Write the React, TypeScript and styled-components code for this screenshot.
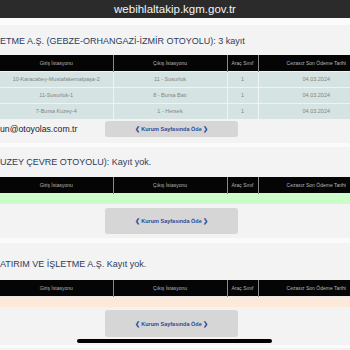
import React from "react";
import styled, { createGlobalStyle } from "styled-components";

const GlobalStyle = createGlobalStyle`
  html, body {
    margin: 0;
    padding: 0;
    background: #f3f3f3;
    font-family: "Liberation Sans", Arial, sans-serif;
    overflow: hidden;
  }
`;

type Row = { giris: string; cikis: string; sinif: string; tarih: string };

const rows: Row[] = [
  { giris: "10-Karacabey-Mustafakemalpaşa-2", cikis: "11 - Susurluk", sinif: "1", tarih: "04.03.2024" },
  { giris: "11-Susurluk-1", cikis: "8 - Bursa Batı", sinif: "1", tarih: "04.03.2024" },
  { giris: "7-Bursa Kuzey-4", cikis: "1 - Hersek", sinif: "1", tarih: "04.03.2024" },
];

export default function App() {
  return (
    <>
      <GlobalStyle />
      <Page>
        <AddressBar>webihlaltakip.kgm.gov.tr</AddressBar>
        <TopGap />

        <Section $top={11} $bottom={6}>
          <Title>ETME A.Ş. (GEBZE-ORHANGAZİ-İZMİR OTOYOLU): 3 kayıt</Title>
          <Table $gap={8}>
            <Head />
            <tbody>
              {rows.map((r, i) => (
                <DataRow key={i}>
                  <td>{r.giris}</td>
                  <td>{r.cikis}</td>
                  <td>{r.sinif}</td>
                  <td>{r.tarih}</td>
                </DataRow>
              ))}
            </tbody>
          </Table>
          <Footer $gap={2}>
            <Email>un@otoyolas.com.tr</Email>
            <PayButton $h={16}>❮ Kurum Sayfasında Öde ❯</PayButton>
          </Footer>
        </Section>
        <Separator $h={4} />

        <Section $top={10} $bottom={4}>
          <Title>UZEY ÇEVRE OTOYOLU): Kayıt yok.</Title>
          <Table $gap={9}>
            <Head />
            <tbody>
              <EmptyRow $bg="#ccfdc8">
                <td colSpan={4} />
              </EmptyRow>
            </tbody>
          </Table>
          <Footer $gap={4}>
            <Email />
            <PayButton $h={26}>❮ Kurum Sayfasında Öde ❯</PayButton>
          </Footer>
        </Section>
        <Separator $h={5} />

        <Section $top={16} $bottom={0}>
          <Title>ATIRIM VE İŞLETME A.Ş. Kayıt yok.</Title>
          <Table $gap={10}>
            <Head />
            <tbody>
              <EmptyRow $bg="#fde9da">
                <td colSpan={4} />
              </EmptyRow>
            </tbody>
          </Table>
          <Footer $gap={3}>
            <Email />
            <PayButton $h={27}>❮ Kurum Sayfasında Öde ❯</PayButton>
          </Footer>
          <ScrollTrack>
            <ScrollThumb />
          </ScrollTrack>
        </Section>
        <Separator $h={3} />
      </Page>
    </>
  );
}

function Head() {
  return (
    <>
      <colgroup>
        <col style={{ width: 113 }} />
        <col style={{ width: 114 }} />
        <col style={{ width: 31 }} />
        <col style={{ width: 116 }} />
      </colgroup>
      <thead>
        <HeadRow>
          <th>Giriş İstasyonu</th>
          <th>Çıkış İstasyonu</th>
          <th>Araç Sınıf</th>
          <th>Cezasız Son Ödeme Tarihi</th>
        </HeadRow>
      </thead>
    </>
  );
}

const Page = styled.div`
  width: 350px;
  height: 350px;
  overflow: hidden;
`;

const AddressBar = styled.div`
  height: 18px;
  background: #2b2b2b;
  color: #f4f4f4;
  font-size: 11.5px;
  line-height: 18px;
  text-align: center;
`;

const TopGap = styled.div`
  height: 7px;
  background: #fbfbfb;
`;

const Section = styled.section<{ $top: number; $bottom: number }>`
  padding: ${(p) => p.$top}px 0 ${(p) => p.$bottom}px;
  background: #f3f3f3;
`;

const Separator = styled.div<{ $h: number }>`
  height: ${(p) => p.$h}px;
  background: #fbfbfb;
`;

const Title = styled.div`
  font-size: 9px;
  line-height: 11px;
  color: #2f3b5c;
  white-space: nowrap;
`;

const Table = styled.table<{ $gap: number }>`
  margin-top: ${(p) => p.$gap}px;
  width: 374px;
  table-layout: fixed;
  border-collapse: collapse;
  font-size: 5.5px;
`;

const HeadRow = styled.tr`
  height: 16px;
  background: #050505;
  th {
    color: #b5b5b5;
    font-weight: normal;
    font-size: 5px;
    border-left: 1px solid #8a8a8a;
    padding: 0;
    text-align: center;
  }
  th:first-child {
    border-left: none;
  }
`;

const DataRow = styled.tr`
  height: 16px;
  background: #d5e3e3;
  td {
    color: #7d8686;
    text-align: center;
    padding: 0;
    border-left: 1px solid #eef3f3;
    border-top: 1px solid #eef3f3;
    white-space: nowrap;
    overflow: hidden;
  }
  td:first-child {
    border-left: none;
  }
`;

const EmptyRow = styled.tr<{ $bg: string }>`
  height: 11px;
  background: ${(p) => p.$bg};
  td {
    padding: 0;
    border-top: 1px solid #e9e9e9;
  }
`;

const Footer = styled.div<{ $gap: number }>`
  margin-top: ${(p) => p.$gap}px;
  display: flex;
  align-items: center;
`;

const Email = styled.div`
  width: 105px;
  font-size: 8.7px;
  color: #222;
  white-space: nowrap;
`;

const PayButton = styled.div<{ $h: number }>`
  width: 133px;
  height: ${(p) => p.$h}px;
  background: #d6d6d6;
  border-radius: 3px;
  display: flex;
  align-items: center;
  justify-content: center;
  font-size: 5.5px;
  font-weight: bold;
  color: #2a4a9a;
`;

const ScrollTrack = styled.div`
  display: flex;
  height: 8px;
  padding: 2px 0 0 77px;
  box-sizing: border-box;
`;

const ScrollThumb = styled.span`
  display: block;
  flex: none;
  width: 195px;
  height: 4px;
  border-radius: 2px;
  background: #000000;
`;
